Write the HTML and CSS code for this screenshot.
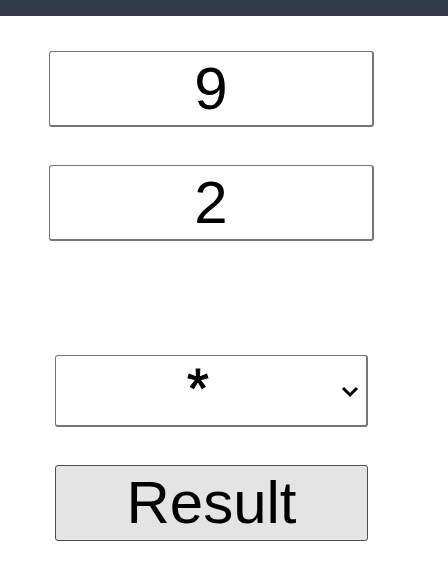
FILE: index.html
```html
<!DOCTYPE html>
<html lang="en">
<head>
<meta charset="utf-8">
<meta name="viewport" content="width=device-width, initial-scale=1">
<title>Calculator</title>
<link rel="stylesheet" href="styles.css">
</head>
<body>
<header class="topbar"></header>
<form class="calc">
  <input class="field number" type="text" inputmode="numeric" aria-label="First number" value="9">
  <input class="field number" type="text" inputmode="numeric" aria-label="Second number" value="2">
  <div class="picker">
    <select class="field operator" aria-label="Operator">
      <option>+</option>
      <option>-</option>
      <option selected>*</option>
      <option>/</option>
    </select>
    <svg class="chevron" viewBox="0 0 18 12" aria-hidden="true"><path d="M2 2l7 7 7-7" fill="none" stroke="#000" stroke-width="3"/></svg>
  </div>
  <button class="field result" type="button">Result</button>
</form>
</body>
</html>
```

FILE: styles.css
```css
* {
  box-sizing: border-box;
}

body {
  margin: 0;
  background: #fff;
  font-family: "Liberation Sans", Arial, sans-serif;
}

.topbar {
  height: 16px;
  background: linear-gradient(#323c4a, #35394a);
}

.calc {
  display: flex;
  flex-direction: column;
  gap: 38px;
  padding: 35px 74px 36px 49px;
}

.field {
  width: 100%;
  height: 76px;
  margin: 0;
  padding: 0;
  border: 1px solid #767676;
  border-right-width: 2px;
  border-bottom-width: 2px;
  border-radius: 3px;
  background: #fff;
  color: #000;
  font: 60px/70px "Liberation Sans", Arial, sans-serif;
  text-align: center;
}

.picker {
  position: relative;
  margin: 76px 6px 0;
}

.operator {
  display: block;
  height: 72px;
  padding: 0 26px 6px 0;
  appearance: none;
  font-size: 56px;
  line-height: 64px;
  -webkit-text-stroke: 1px #000;
}

.chevron {
  position: absolute;
  top: 31px;
  right: 9px;
  width: 18px;
  height: 12px;
  pointer-events: none;
}

.result {
  width: auto;
  margin: 0 6px;
  border: 1px solid #4d4d4d;
  background: #e4e4e4;
}
```
